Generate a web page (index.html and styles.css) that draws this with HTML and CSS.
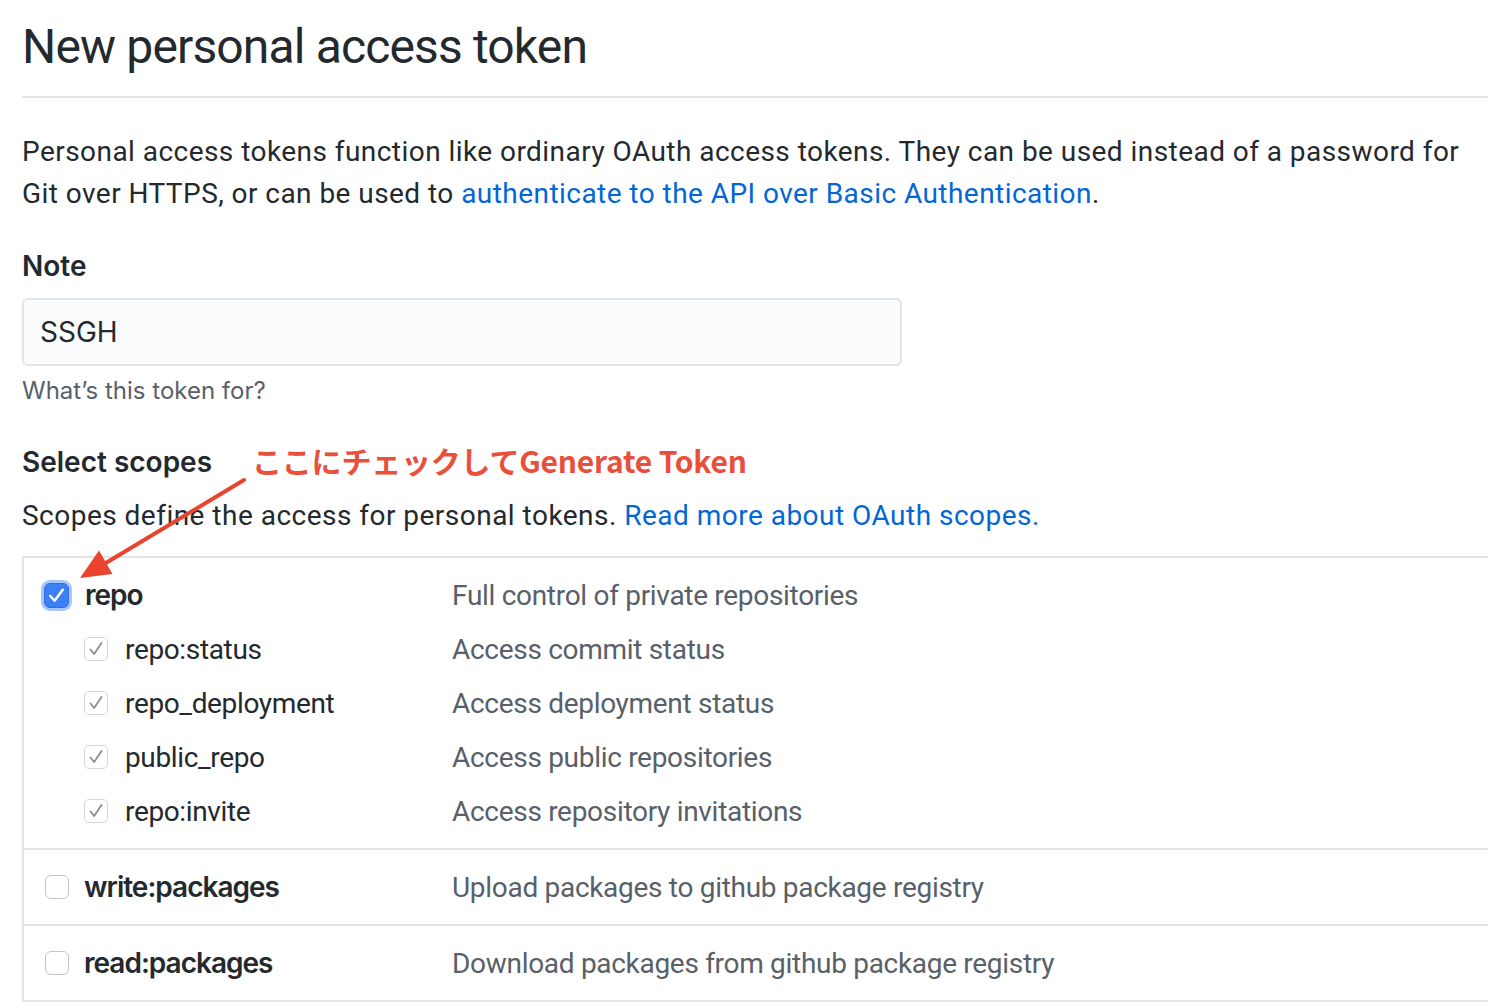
FILE: index.html
```html
<!DOCTYPE html>
<html lang="en">
<head>
<meta charset="utf-8">
<title>New personal access token</title>
<link rel="stylesheet" href="styles.css">
</head>
<body>
<div class="page">
  <div class="subhead">
    <h2 class="subhead-title">New personal access token</h2>
  </div>

  <p class="intro">Personal access tokens function like ordinary OAuth access tokens. They can be used instead of a password for<br>Git over HTTPS, or can be used to <a class="link" href="#">authenticate to the API over Basic Authentication</a>.</p>

  <div class="form-group">
    <label class="form-label">Note</label>
    <div class="input">SSGH</div>
    <p class="note">What’s this token for?</p>
  </div>

  <h3 class="scopes-title">Select scopes</h3>
  <p class="scopes-desc">Scopes define the access for personal tokens. <a class="link" href="#">Read more about OAuth scopes.</a></p>

  <div class="scopes">
    <div class="scope-group">
      <div class="scope-row">
        <div class="scope-name">
          <span class="cb cb-checked"><svg viewBox="0 0 24 24" width="23" height="23"><path d="M5.5 12.5 L10 17.5 L18.5 6" fill="none" stroke="#fff" stroke-width="2.6" stroke-linecap="round" stroke-linejoin="round"/></svg></span>
          <span class="label-strong">repo</span>
        </div>
        <div class="scope-desc">Full control of private repositories</div>
      </div>
      <div class="scope-row sub">
        <div class="scope-name">
          <span class="cb cb-sub"><svg viewBox="0 0 24 24" width="24" height="24"><path d="M6 12.5 L10 17.5 L18 5.5" fill="none" stroke="#8f8f8f" stroke-width="2" stroke-linecap="round" stroke-linejoin="round"/></svg></span>
          <span class="label">repo:status</span>
        </div>
        <div class="scope-desc">Access commit status</div>
      </div>
      <div class="scope-row sub">
        <div class="scope-name">
          <span class="cb cb-sub"><svg viewBox="0 0 24 24" width="24" height="24"><path d="M6 12.5 L10 17.5 L18 5.5" fill="none" stroke="#8f8f8f" stroke-width="2" stroke-linecap="round" stroke-linejoin="round"/></svg></span>
          <span class="label">repo_deployment</span>
        </div>
        <div class="scope-desc">Access deployment status</div>
      </div>
      <div class="scope-row sub">
        <div class="scope-name">
          <span class="cb cb-sub"><svg viewBox="0 0 24 24" width="24" height="24"><path d="M6 12.5 L10 17.5 L18 5.5" fill="none" stroke="#8f8f8f" stroke-width="2" stroke-linecap="round" stroke-linejoin="round"/></svg></span>
          <span class="label">public_repo</span>
        </div>
        <div class="scope-desc">Access public repositories</div>
      </div>
      <div class="scope-row sub">
        <div class="scope-name">
          <span class="cb cb-sub"><svg viewBox="0 0 24 24" width="24" height="24"><path d="M6 12.5 L10 17.5 L18 5.5" fill="none" stroke="#8f8f8f" stroke-width="2" stroke-linecap="round" stroke-linejoin="round"/></svg></span>
          <span class="label">repo:invite</span>
        </div>
        <div class="scope-desc">Access repository invitations</div>
      </div>
    </div>
    <div class="scope-group">
      <div class="scope-row">
        <div class="scope-name">
          <span class="cb cb-empty"></span>
          <span class="label-strong">write:packages</span>
        </div>
        <div class="scope-desc">Upload packages to github package registry</div>
      </div>
    </div>
    <div class="scope-group">
      <div class="scope-row">
        <div class="scope-name">
          <span class="cb cb-empty"></span>
          <span class="label-strong">read:packages</span>
        </div>
        <div class="scope-desc">Download packages from github package registry</div>
      </div>
    </div>
  </div>

  <span class="annotation">ここにチェックしてGenerate Token</span>
  <svg class="arrow" width="300" height="620" viewBox="0 0 300 620">
    <line x1="244" y1="480" x2="100" y2="566.5" stroke="#e8442f" stroke-width="4" stroke-linecap="round"/>
    <polygon points="80,578 99,550.5 112.5,574" fill="#e8442f"/>
  </svg>
</div>
</body>
</html>
```

FILE: styles.css
```css
html, body {
  margin: 0;
  padding: 0;
  background: #ffffff;
  overflow: hidden;
}

body {
  font-family: Roboto, "Liberation Sans", sans-serif;
  color: #24292e;
}

.page {
  position: relative;
  width: 1540px;
  padding-left: 22px;
}

.subhead {
  border-bottom: 2px solid #e1e4e8;
  padding-top: 17px;
  padding-bottom: 19px;
}

.subhead-title {
  margin: 0;
  font-size: 48px;
  line-height: 60px;
  font-weight: 400;
  letter-spacing: -0.85px;
}

.intro {
  margin: 33px 0 0;
  font-size: 28px;
  line-height: 42px;
  letter-spacing: 0.45px;
  white-space: nowrap;
}

.link {
  color: #0366d6;
  text-decoration: none;
}

.form-group {
  margin-top: 30px;
}

.form-label {
  display: block;
  font-family: Inter, "Noto Sans", sans-serif;
  font-size: 28px;
  line-height: 42px;
  font-weight: 600;
}

.input {
  margin-top: 11px;
  box-sizing: border-box;
  width: 880px;
  height: 68px;
  border: 2px solid #e1e4e8;
  border-radius: 6px;
  background: #fafbfc;
  padding: 0 16px;
  font-family: Inter, "Noto Sans", sans-serif;
  font-size: 28px;
  line-height: 64px;
  color: #24292e;
}

.note {
  margin: 7px 0 0;
  font-family: Inter, "Noto Sans", sans-serif;
  font-size: 24px;
  line-height: 36px;
  color: #586069;
}

.scopes-title {
  margin: 32px 0 0;
  font-family: Inter, "Noto Sans", sans-serif;
  font-size: 28px;
  line-height: 42px;
  font-weight: 600;
}

.scopes-desc {
  margin: 12px 0 0;
  font-size: 28px;
  line-height: 42px;
  letter-spacing: 0.48px;
}

.scopes {
  margin-top: 19px;
  border: 2px solid #e1e4e8;
  border-right: none;
}

.scope-group {
  padding: 10px 0;
}

.scope-group + .scope-group {
  border-top: 2px solid #e1e4e8;
}

.scope-row {
  display: grid;
  grid-template-columns: 428px 1fr;
  height: 54px;
  align-items: center;
  font-size: 28px;
}

.scope-name {
  display: flex;
  align-items: center;
  gap: 16px;
  padding-left: 20px;
}

.scope-row.sub .scope-name {
  padding-left: 60px;
  gap: 17px;
}

.label {
  letter-spacing: -0.35px;
}

.label-strong {
  font-family: Inter, "Noto Sans", sans-serif;
  font-weight: 600;
  letter-spacing: -1px;
}

.scope-desc {
  color: #586069;
  letter-spacing: -0.3px;
}

.cb {
  box-sizing: border-box;
  display: flex;
  align-items: center;
  justify-content: center;
  flex: none;
  overflow: hidden;
}

.cb-checked {
  width: 25px;
  height: 25px;
  border-radius: 6px;
  background: #3d7ff5;
  border: 1px solid #2f6fe0;
  box-shadow: 0 0 0 3px rgba(61, 127, 245, 0.45);
}

.cb-sub {
  width: 24px;
  height: 24px;
  border-radius: 5px;
  background: #ffffff;
  border: 1.5px solid #d6d6d6;
}

.cb-empty {
  width: 24px;
  height: 24px;
  margin-left: 1px;
  margin-right: -1px;
  border-radius: 6px;
  background: #ffffff;
  border: 1.5px solid #c4c4c4;
}

.annotation {
  position: absolute;
  left: 252px;
  top: 439px;
  font-family: "Noto Sans CJK JP", "Noto Sans", sans-serif;
  font-size: 30px;
  line-height: 42px;
  font-weight: 700;
  color: #e9503c;
  letter-spacing: -0.2px;
}

.arrow {
  position: absolute;
  left: 0;
  top: 0;
  pointer-events: none;
}
```
